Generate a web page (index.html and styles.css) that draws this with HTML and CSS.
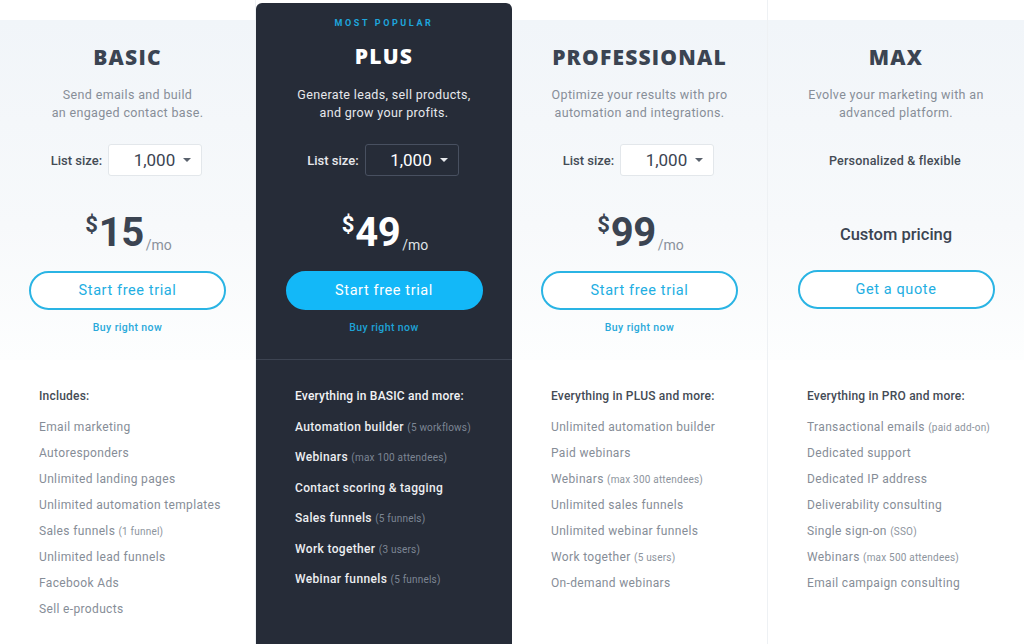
FILE: index.html
```html
<!DOCTYPE html>
<html>
<head>
<meta charset="utf-8">
<link rel="stylesheet" href="styles.css">
</head>
<body>
<div class="plans">
  <section class="plan">
    <div class="head">
      <h2 class="title">BASIC</h2>
      <p class="desc">Send emails and build<br>an engaged contact base.</p>
      <div class="size"><span class="size-label">List size:</span><span class="select">1,000<i class="caret"></i></span></div>
      <div class="price"><span class="cur">$</span><span class="amt">15</span><span class="per">/mo</span></div>
      <a class="btn">Start free trial</a>
      <a class="buy">Buy right now</a>
    </div>
    <div class="features">
      <h3 class="inc">Includes:</h3>
      <ul>
        <li>Email marketing</li>
        <li>Autoresponders</li>
        <li>Unlimited landing pages</li>
        <li>Unlimited automation templates</li>
        <li>Sales funnels <small>(1 funnel)</small></li>
        <li>Unlimited lead funnels</li>
        <li>Facebook Ads</li>
        <li>Sell e-products</li>
      </ul>
    </div>
  </section>
  <section class="plan dark">
    <div class="head">
      <div class="badge">MOST POPULAR</div>
      <h2 class="title">PLUS</h2>
      <p class="desc">Generate leads, sell products,<br>and grow your profits.</p>
      <div class="size"><span class="size-label">List size:</span><span class="select">1,000<i class="caret"></i></span></div>
      <div class="price"><span class="cur">$</span><span class="amt">49</span><span class="per">/mo</span></div>
      <a class="btn">Start free trial</a>
      <a class="buy">Buy right now</a>
    </div>
    <div class="features">
      <h3 class="inc">Everything in BASIC and more:</h3>
      <ul>
        <li>Automation builder <small>(5 workflows)</small></li>
        <li>Webinars <small>(max 100 attendees)</small></li>
        <li>Contact scoring &amp; tagging</li>
        <li>Sales funnels <small>(5 funnels)</small></li>
        <li>Work together <small>(3 users)</small></li>
        <li>Webinar funnels <small>(5 funnels)</small></li>
      </ul>
    </div>
  </section>
  <section class="plan">
    <div class="head">
      <h2 class="title">PROFESSIONAL</h2>
      <p class="desc">Optimize your results with pro<br>automation and integrations.</p>
      <div class="size"><span class="size-label">List size:</span><span class="select">1,000<i class="caret"></i></span></div>
      <div class="price"><span class="cur">$</span><span class="amt">99</span><span class="per">/mo</span></div>
      <a class="btn">Start free trial</a>
      <a class="buy">Buy right now</a>
    </div>
    <div class="features">
      <h3 class="inc">Everything in PLUS and more:</h3>
      <ul>
        <li>Unlimited automation builder</li>
        <li>Paid webinars</li>
        <li>Webinars <small>(max 300 attendees)</small></li>
        <li>Unlimited sales funnels</li>
        <li>Unlimited webinar funnels</li>
        <li>Work together <small>(5 users)</small></li>
        <li>On-demand webinars</li>
      </ul>
    </div>
  </section>
  <section class="plan last">
    <div class="head">
      <h2 class="title">MAX</h2>
      <p class="desc">Evolve your marketing with an<br>advanced platform.</p>
      <div class="size"><span class="flex-note">Personalized &amp; flexible</span></div>
      <div class="custom">Custom pricing</div>
      <a class="btn">Get a quote</a>
    </div>
    <div class="features">
      <h3 class="inc">Everything in PRO and more:</h3>
      <ul>
        <li>Transactional emails <small>(paid add-on)</small></li>
        <li>Dedicated support</li>
        <li>Dedicated IP address</li>
        <li>Deliverability consulting</li>
        <li>Single sign-on <small>(SSO)</small></li>
        <li>Webinars <small>(max 500 attendees)</small></li>
        <li>Email campaign consulting</li>
      </ul>
    </div>
  </section>
</div>
</body>
</html>
```
FILE: styles.css
```css
* { box-sizing: border-box; }
html, body { margin: 0; padding: 0; background: #ffffff; }
body {
  font-family: Roboto, "Liberation Sans", sans-serif;
  color: #3b4452;
  width: 1024px;
  height: 644px;
  overflow: hidden;
}
.plans {
  display: grid;
  grid-template-columns: repeat(4, 256px);
  height: 644px;
}
.plan {
  display: flex;
  flex-direction: column;
  border-right: 1px solid #eef1f4;
}
.plan.last { border-right: none; }
.head {
  margin-top: 20px;
  height: 340px;
  padding-top: 24px;
  display: flex;
  flex-direction: column;
  align-items: center;
  background: linear-gradient(180deg, #f1f5f9 0%, #f7f9fb 60%, #fdfefe 100%);
}
.title {
  margin: 0;
  font-family: "Open Sans", "Liberation Sans", sans-serif;
  font-weight: 800;
  font-size: 21px;
  line-height: 26px;
  letter-spacing: 1.2px;
  color: #3b4452;
}
.desc {
  margin: 16px 0 0;
  font-size: 12.5px;
  line-height: 18px;
  letter-spacing: 0.35px;
  text-align: center;
  color: #878e98;
}
.size {
  margin-top: 22px;
  height: 32px;
  display: flex;
  align-items: center;
  gap: 6px;
  padding-right: 2px;
}
.size-label {
  font-size: 13px;
  font-weight: 500;
  color: #444b55;
}
.select {
  width: 94px;
  height: 32px;
  border: 1px solid #e3e7eb;
  border-radius: 3px;
  background: #ffffff;
  display: flex;
  align-items: center;
  justify-content: flex-end;
  padding-right: 10px;
  gap: 8px;
  font-size: 17px;
  color: #3b4452;
}
.caret {
  width: 0;
  height: 0;
  border-left: 4px solid transparent;
  border-right: 4px solid transparent;
  border-top: 4px solid #5a626d;
}
.flex-note {
  font-size: 12.5px;
  font-weight: 500;
  color: #444b55;
  letter-spacing: 0.2px;
}
.price {
  margin-top: 35px;
  height: 44px;
  display: flex;
  align-items: flex-start;
  padding-left: 2px;
  color: #3b4452;
}
.cur {
  font-size: 22px;
  font-weight: 700;
  line-height: 22px;
  margin-top: 3px;
}
.amt {
  font-size: 40px;
  font-weight: 700;
  line-height: 44px;
  letter-spacing: -0.5px;
  margin-left: 1px;
}
.per {
  font-size: 14px;
  line-height: 14px;
  color: #8a919b;
  margin-top: 27px;
  margin-left: 2px;
}
.custom {
  margin-top: 48px;
  height: 22px;
  line-height: 22px;
  font-size: 16.5px;
  font-weight: 500;
  color: #3b4452;
  margin-bottom: 8px;
}
.btn {
  margin-top: 16px;
  width: 197px;
  height: 39px;
  border: 2px solid #2ab4e4;
  border-radius: 20px;
  display: flex;
  align-items: center;
  justify-content: center;
  font-size: 14.5px;
  letter-spacing: 0.6px;
  color: #22aee2;
  background: #ffffff;
}
.buy {
  margin-top: 11px;
  font-size: 10.5px;
  font-weight: 500;
  line-height: 14px;
  letter-spacing: 0.4px;
  color: #2aa9da;
}
.features {
  padding: 27px 0 0 39px;
}
.inc {
  margin: 0;
  font-size: 12px;
  font-weight: 500;
  line-height: 18px;
  letter-spacing: 0.2px;
  color: #444b55;
}
ul {
  list-style: none;
  margin: 9px 0 0;
  padding: 0;
}
li {
  font-size: 12px;
  line-height: 26px;
  letter-spacing: 0.35px;
  color: #868d97;
  white-space: nowrap;
}
small {
  font-size: 10px;
  line-height: 1;
  letter-spacing: 0.2px;
  color: #8d949d;
}

/* dark featured plan */
.plan.dark {
  margin-top: 3px;
  background: #262c38;
  border-radius: 6px 6px 0 0;
  border-right: none;
}
.dark .head {
  margin-top: 0;
  height: 357px;
  padding-top: 14px;
  background: transparent;
  border-bottom: 1px solid #3d4452;
}
.badge {
  font-size: 9px;
  font-weight: 700;
  line-height: 12px;
  letter-spacing: 2.6px;
  color: #1ea6dc;
  margin-bottom: 14px;
}
.dark .title { color: #ffffff; }
.dark .desc { margin-top: 17px; color: #e6e8ec; }
.dark .size { margin-top: 22px; }
.dark .price { margin-top: 35px; }
.dark .btn { margin-top: 16px; }
.dark .size-label { color: #e6e8ec; }
.dark .select {
  background: #262c38;
  border-color: #485060;
  color: #ffffff;
}
.dark .caret { border-top-color: #e6e8ec; }
.dark .price { color: #ffffff; }
.dark .per { color: #dfe2e6; }
.dark .btn {
  background: #13b8f8;
  border-color: #13b8f8;
  color: #ffffff;
}
.dark .buy { color: #1ea2d6; }
.dark .features { padding-top: 27px; }
.dark .inc { color: #f2f3f5; }
.dark ul { margin-top: 7px; }
.dark li {
  line-height: 30.4px;
  color: #eceef1;
  font-weight: 500;
}
.dark small { color: #7d8694; font-weight: 400; }
```
